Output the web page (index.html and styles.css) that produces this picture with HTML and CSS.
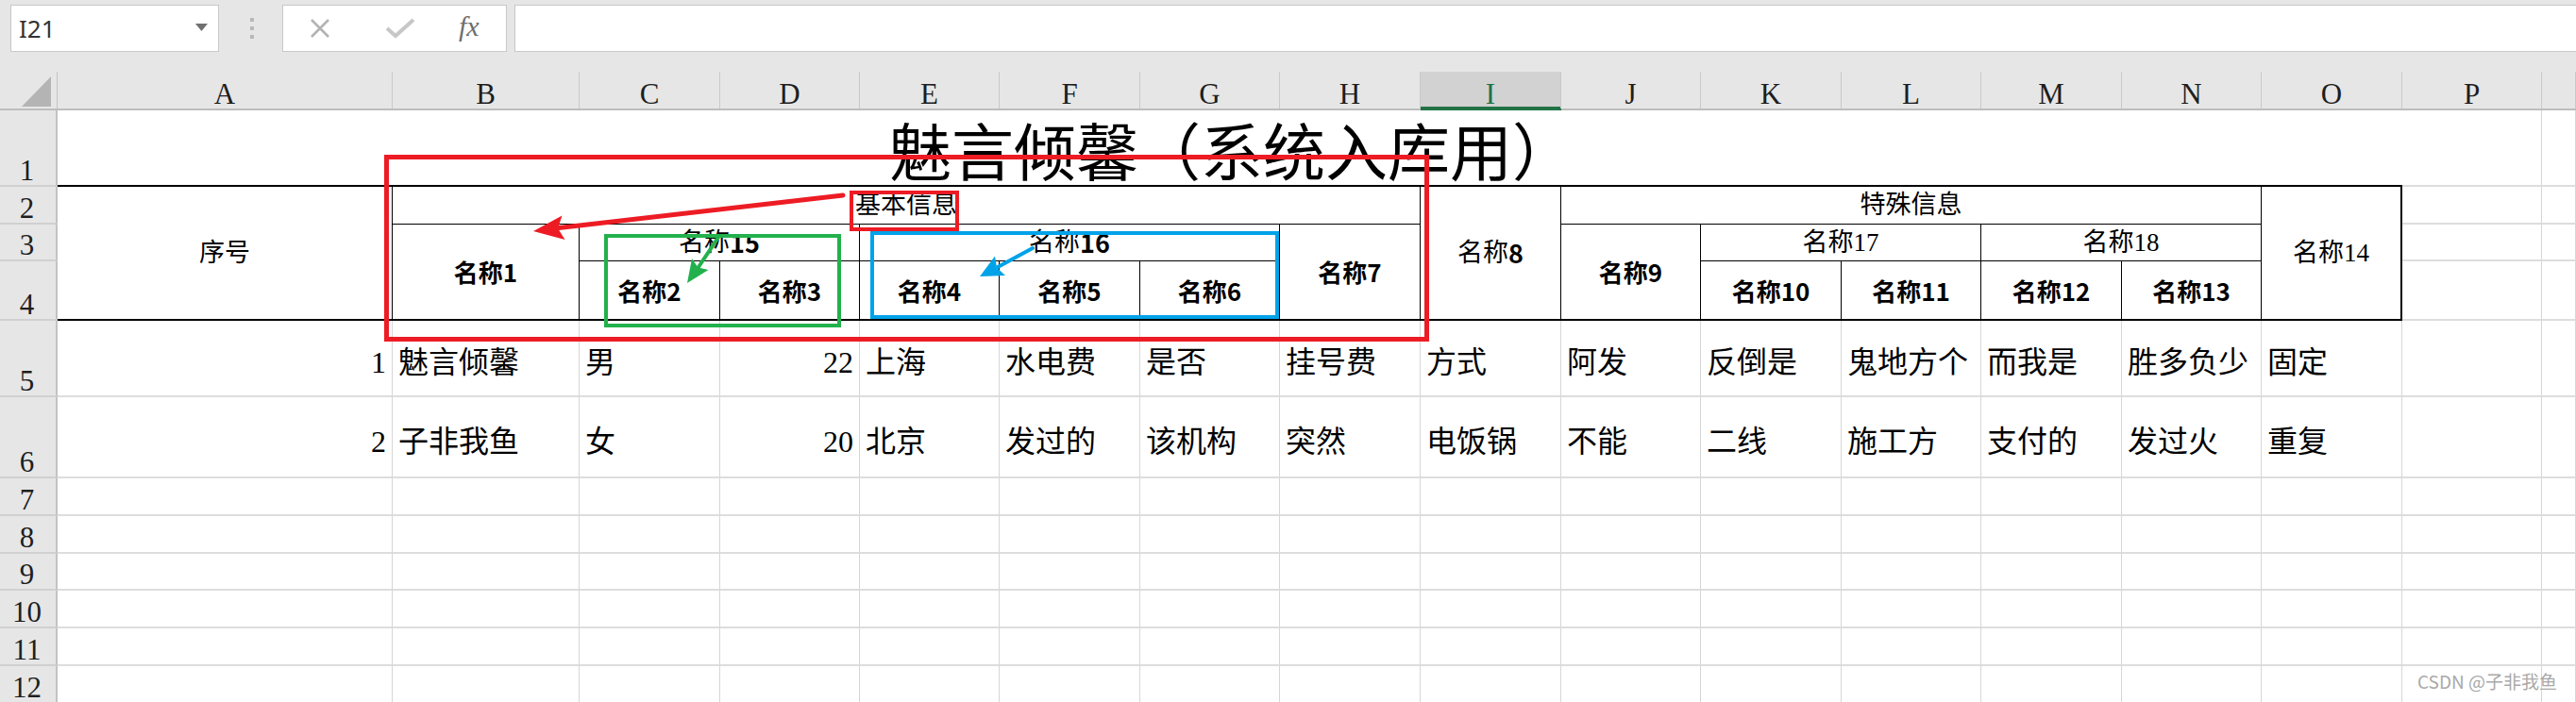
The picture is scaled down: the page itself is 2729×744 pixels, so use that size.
FILE: index.html
```html
<!DOCTYPE html>
<html lang="zh">
<head>
<meta charset="utf-8">
<title>Excel</title>
<link rel="stylesheet" href="styles.css">
</head>
<body>
<div class="app">
  <div class="toolbar">
    <div class="namebox">
      <span class="ref">I21</span>
      <svg class="dd" width="13" height="8" viewBox="0 0 13 8"><polygon points="0,0 13,0 6.5,8" fill="#707070"/></svg>
    </div>
    <div class="sep"><i></i><i></i><i></i></div>
    <div class="fxbox">
      <svg class="ic-x" width="24" height="22" viewBox="0 0 24 22"><path d="M3 2 L21 20 M21 2 L3 20" stroke="#b3b3b3" stroke-width="2.6" fill="none"/></svg>
      <svg class="ic-ok" width="32" height="22" viewBox="0 0 32 22"><path d="M2 11 L11 19 L30 2" stroke="#c7c7c7" stroke-width="4" fill="none"/></svg>
      <span class="fx">fx</span>
    </div>
    <div class="finput"></div>
  </div>

  <div class="sheet">
    <!-- column headers -->
    <div class="corner"><span><svg width="32" height="33" viewBox="0 0 32 33"><polygon points="31,0 31,32 0,32" fill="#b4b4b4"/></svg></span></div>
    <div class="ch"><span>A</span></div>
    <div class="ch"><span>B</span></div>
    <div class="ch"><span>C</span></div>
    <div class="ch"><span>D</span></div>
    <div class="ch"><span>E</span></div>
    <div class="ch"><span>F</span></div>
    <div class="ch"><span>G</span></div>
    <div class="ch"><span>H</span></div>
    <div class="ch sel"><span>I</span></div>
    <div class="ch"><span>J</span></div>
    <div class="ch"><span>K</span></div>
    <div class="ch"><span>L</span></div>
    <div class="ch"><span>M</span></div>
    <div class="ch"><span>N</span></div>
    <div class="ch"><span>O</span></div>
    <div class="ch"><span>P</span></div>
    <div class="ch"><span></span></div>

    <!-- row 1 -->
    <div class="rh">1</div>
    <div class="c t cs15">魅言倾馨（系统入库用）</div>
    <div class="c"></div>
    <div class="c"></div>

    <!-- row 2 -->
    <div class="rh">2</div>
    <div class="c h hb rs3 r">序号</div>
    <div class="c h cs7 r">基本信息</div>
    <div class="c h hb rs3 r">名称<b class="bd">8</b></div>
    <div class="c h cs5 r">特殊信息</div>
    <div class="c h hb ho rs3 r">名称14</div>
    <div class="c"></div>
    <div class="c"></div>

    <!-- row 3 -->
    <div class="rh">3</div>
    <div class="c h hb rs2 b">名称1</div>
    <div class="c h cs2 r">名称<b class="bd">15</b></div>
    <div class="c h cs3 r">名称<b class="bd">16</b></div>
    <div class="c h hb rs2 b">名称7</div>
    <div class="c h hb rs2 b">名称9</div>
    <div class="c h cs2 r">名称17</div>
    <div class="c h cs2 r">名称18</div>
    <div class="c"></div>
    <div class="c"></div>

    <!-- row 4 -->
    <div class="rh">4</div>
    <div class="c h hb b">名称2</div>
    <div class="c h hb b">名称3</div>
    <div class="c h hb b">名称4</div>
    <div class="c h hb b">名称5</div>
    <div class="c h hb b">名称6</div>
    <div class="c h hb b">名称10</div>
    <div class="c h hb b">名称11</div>
    <div class="c h hb b">名称12</div>
    <div class="c h hb b">名称13</div>
    <div class="c"></div>
    <div class="c"></div>

    <!-- row 5 -->
    <div class="rh">5</div>
    <div class="c d n">1</div>
    <div class="c d">魅言倾馨</div>
    <div class="c d">男</div>
    <div class="c d n">22</div>
    <div class="c d">上海</div>
    <div class="c d">水电费</div>
    <div class="c d">是否</div>
    <div class="c d">挂号费</div>
    <div class="c d">方式</div>
    <div class="c d">阿发</div>
    <div class="c d">反倒是</div>
    <div class="c d">鬼地方个</div>
    <div class="c d">而我是</div>
    <div class="c d">胜多负少</div>
    <div class="c d">固定</div>
    <div class="c"></div>
    <div class="c"></div>

    <!-- row 6 -->
    <div class="rh">6</div>
    <div class="c d n">2</div>
    <div class="c d">子非我鱼</div>
    <div class="c d">女</div>
    <div class="c d n">20</div>
    <div class="c d">北京</div>
    <div class="c d">发过的</div>
    <div class="c d">该机构</div>
    <div class="c d">突然</div>
    <div class="c d">电饭锅</div>
    <div class="c d">不能</div>
    <div class="c d">二线</div>
    <div class="c d">施工方</div>
    <div class="c d">支付的</div>
    <div class="c d">发过火</div>
    <div class="c d">重复</div>
    <div class="c"></div>
    <div class="c"></div>

    <!-- row 7 -->
    <div class="rh">7</div>
    <div class="c"></div><div class="c"></div><div class="c"></div><div class="c"></div><div class="c"></div><div class="c"></div><div class="c"></div><div class="c"></div><div class="c"></div><div class="c"></div><div class="c"></div><div class="c"></div><div class="c"></div><div class="c"></div><div class="c"></div><div class="c"></div><div class="c"></div>
    <!-- row 8 -->
    <div class="rh">8</div>
    <div class="c"></div><div class="c"></div><div class="c"></div><div class="c"></div><div class="c"></div><div class="c"></div><div class="c"></div><div class="c"></div><div class="c"></div><div class="c"></div><div class="c"></div><div class="c"></div><div class="c"></div><div class="c"></div><div class="c"></div><div class="c"></div><div class="c"></div>
    <!-- row 9 -->
    <div class="rh">9</div>
    <div class="c"></div><div class="c"></div><div class="c"></div><div class="c"></div><div class="c"></div><div class="c"></div><div class="c"></div><div class="c"></div><div class="c"></div><div class="c"></div><div class="c"></div><div class="c"></div><div class="c"></div><div class="c"></div><div class="c"></div><div class="c"></div><div class="c"></div>
    <!-- row 10 -->
    <div class="rh">10</div>
    <div class="c"></div><div class="c"></div><div class="c"></div><div class="c"></div><div class="c"></div><div class="c"></div><div class="c"></div><div class="c"></div><div class="c"></div><div class="c"></div><div class="c"></div><div class="c"></div><div class="c"></div><div class="c"></div><div class="c"></div><div class="c"></div><div class="c"></div>
    <!-- row 11 -->
    <div class="rh">11</div>
    <div class="c"></div><div class="c"></div><div class="c"></div><div class="c"></div><div class="c"></div><div class="c"></div><div class="c"></div><div class="c"></div><div class="c"></div><div class="c"></div><div class="c"></div><div class="c"></div><div class="c"></div><div class="c"></div><div class="c"></div><div class="c"></div><div class="c"></div>
    <!-- row 12 -->
    <div class="rh">12</div>
    <div class="c"></div><div class="c"></div><div class="c"></div><div class="c"></div><div class="c"></div><div class="c"></div><div class="c"></div><div class="c"></div><div class="c"></div><div class="c"></div><div class="c"></div><div class="c"></div><div class="c"></div><div class="c"></div><div class="c"></div><div class="c"></div><div class="c"></div>
  </div>

  <svg class="annot" width="2729" height="744" viewBox="0 0 2729 744">
    <!-- red -->
    <rect x="409.5" y="166.5" width="1102" height="193" fill="none" stroke="#ed1c24" stroke-width="5"/>
    <rect x="902" y="204" width="112" height="39" fill="none" stroke="#ed1c24" stroke-width="4"/>
    <line x1="893" y1="207" x2="592" y2="241.5" stroke="#ed1c24" stroke-width="5" stroke-linecap="round"/>
    <polygon points="565,245 598.5,254 591,242 595.5,228.5" fill="#ed1c24"/>
    <!-- green -->
    <rect x="642" y="250" width="247" height="95" fill="none" stroke="#22b14c" stroke-width="4"/>
    <line x1="762" y1="250" x2="740" y2="283" stroke="#22b14c" stroke-width="4" stroke-linecap="round"/>
    <polygon points="728,300 750.5,286 739.5,283.5 733,274" fill="#22b14c"/>
    <!-- blue -->
    <rect x="924" y="247" width="429" height="89" fill="none" stroke="#00a2e8" stroke-width="4"/>
    <line x1="1094" y1="263" x2="1057" y2="283" stroke="#00a2e8" stroke-width="4" stroke-linecap="round"/>
    <polygon points="1038,293 1065,292 1056,283.5 1054,271.5" fill="#00a2e8"/>
  </svg>

  <div class="watermark">CSDN @子非我鱼</div>
</div>
</body>
</html>
```

FILE: styles.css
```css
* { box-sizing: border-box; }

html, body {
  margin: 0;
  padding: 0;
  background: #fff;
}

.app {
  position: relative;
  width: 2729px;
  height: 744px;
  overflow: hidden;
  background: #e6e6e6;
}

/* ---------- formula bar ---------- */
.toolbar {
  display: flex;
  align-items: flex-start;
  height: 58px;
  padding-top: 5px;
  background: #e6e6e6;
}

.namebox {
  margin-left: 11px;
  width: 221px;
  height: 50px;
  background: #fff;
  border: 1px solid #c8c8c8;
  display: flex;
  align-items: center;
  justify-content: space-between;
  padding: 0 11px 0 8px;
}

.ref {
  font: 400 26px/1 "Noto Sans", "Open Sans", sans-serif;
  color: #333;
}

.dd { margin-top: -2px; }

.sep {
  margin-left: 33px;
  width: 4px;
  height: 50px;
  display: flex;
  flex-direction: column;
  justify-content: center;
  gap: 5px;
}

.sep i {
  display: block;
  width: 4px;
  height: 4px;
  background: #b8b8b8;
}

.fxbox {
  margin-left: 30px;
  width: 238px;
  height: 50px;
  background: #fff;
  border: 1px solid #c8c8c8;
  display: flex;
  align-items: center;
  padding-left: 27px;
}

.ic-x { margin-right: 57px; }
.ic-ok { margin-right: 46px; }

.fx {
  font: italic 400 30px/1 "Liberation Serif", serif;
  color: #6e6e6e;
  margin-top: -4px;
}

.finput {
  margin-left: 8px;
  flex: 1;
  height: 50px;
  background: #fff;
  border: 1px solid #c8c8c8;
  border-right: none;
}

/* ---------- sheet grid ---------- */
.sheet {
  display: grid;
  grid-template-columns: 61px 355px 198px 149px 148px 148px 149px 148px 149px 149px 148px 149px 148px 149px 148px 149px 148px 1fr;
  grid-template-rows: 59px 81px 40px 39px 63px 81px 86px 40px 40px 39px 40px 40px 40px;
  background: #fff;
}

.corner,
.ch {
  background: #e6e6e6;
  display: flex;
  align-items: flex-end;
  border-bottom: 2px solid #bdbdbd;
}

.corner span {
  flex: 1;
  height: 39px;
  border-right: 1px solid #c4c4c4;
  display: flex;
  align-items: flex-end;
  justify-content: flex-end;
  padding: 0 5px 1px 0;
}

.ch span {
  flex: 1;
  height: 39px;
  border-right: 1px solid #c9c9c9;
  display: flex;
  align-items: flex-end;
  justify-content: center;
  font: 400 31px/1 "Liberation Serif", serif;
  color: #1e1e1e;
}

.ch.sel {
  border-bottom: 2px solid #217346;
}

.ch.sel span {
  background: #d2d2d2;
  color: #217346;
  box-shadow: inset 0 -2px 0 #217346;
}

.rh {
  background: #e6e6e6;
  border-right: 2px solid #c3c3c3;
  border-bottom: 2px solid #d0d0d0;
  display: flex;
  align-items: flex-end;
  justify-content: center;
  font: 400 31px/1 "Liberation Serif", serif;
  color: #1e1e1e;
  padding-right: 2px;
}

.c {
  background: #fff;
  border-right: 1px solid #d6d6d6;
  border-bottom: 2px solid #dddddd;
  min-width: 0;
}

/* spans */
.cs2 { grid-column: span 2; }
.cs3 { grid-column: span 3; }
.cs5 { grid-column: span 5; }
.cs7 { grid-column: span 7; }
.cs15 { grid-column: span 15; }
.rs2 { grid-row: span 2; }
.rs3 { grid-row: span 3; }

/* title */
.t {
  border-right: none;
  border-bottom: 2px solid #000;
  display: flex;
  align-items: center;
  justify-content: center;
  padding-left: 4px;
  font: 400 66px/1 "Noto Sans CJK SC", sans-serif;
  color: #000;
  white-space: nowrap;
}

/* header cells */
.h {
  border-right: 1px solid #000;
  border-bottom: 1px solid #000;
  display: flex;
  align-items: center;
  justify-content: center;
  white-space: nowrap;
  color: #000;
}

.hb { border-bottom: 2px solid #000; }
.ho { border-right: 2px solid #000; }

.b {
  font: 700 26px/1.2 "Noto Sans CJK SC", sans-serif;
}

.r {
  font: 400 27px/1.2 "Liberation Serif", "Noto Sans CJK SC", serif;
}

.bd {
  font: 700 27px/1.2 "Noto Sans CJK SC", sans-serif;
}

/* data cells */
.d {
  display: flex;
  align-items: center;
  padding: 10px 6px 0 6px;
  font: 400 32px/1.2 "Liberation Serif", "Noto Sans CJK SC", serif;
  color: #000;
  white-space: nowrap;
  overflow: hidden;
}

.d.n { justify-content: flex-end; }

/* overlays */
.annot {
  position: absolute;
  left: 0;
  top: 0;
  pointer-events: none;
}

.watermark {
  position: absolute;
  left: 2561px;
  top: 711px;
  font: 400 19px/1.2 "Noto Sans CJK SC", sans-serif;
  color: #a9a9a9;
  white-space: nowrap;
}
```
